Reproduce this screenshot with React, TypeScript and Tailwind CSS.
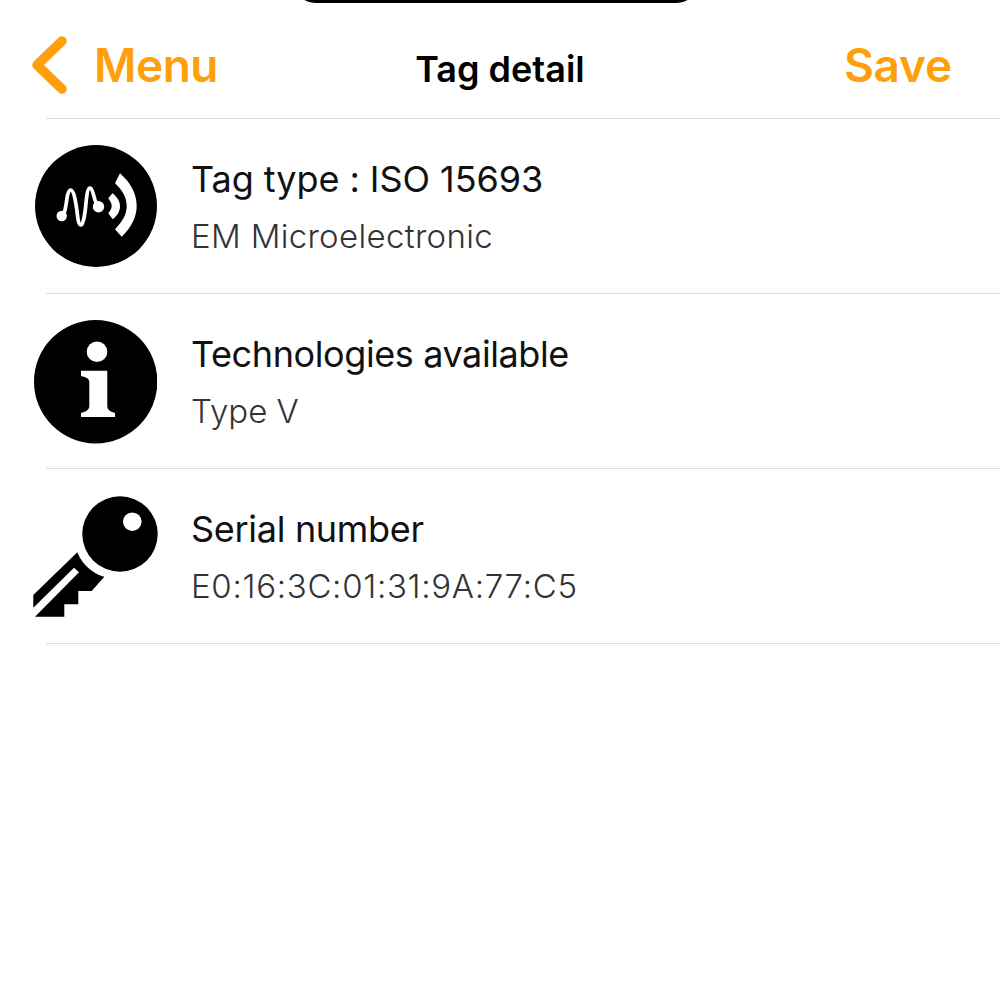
const font = "font-['Inter','Liberation_Sans',sans-serif]";

function WaveIcon() {
  return (
    <svg viewBox="0 0 124 124" className="w-[124px] h-[124px] shrink-0">
      <circle cx="63" cy="61" r="61" fill="#000" />
      <path d="M28.7 71 C32 70 33 60 34 53 C35 47 36 45 37.5 45 C41 45 42.5 56 44 66 C45 76 46 80 48 80 C50 80 52 70 53 58 C54 48 55 43 57 43 C59 43 60.5 50 62 55 C63 58 64 60 65.3 61.7" fill="none" stroke="#fff" strokeWidth="3.7" strokeLinecap="round" strokeLinejoin="round" />
      <circle cx="28.7" cy="71" r="5.2" fill="#fff" />
      <circle cx="65.5" cy="61.7" r="5.7" fill="#fff" />
      <path d="M79.7 48.3 C85 53 87 57 87 61 C87 66 85 70 79.7 74.3 C78 72 76.5 70 75.3 68.3 C77 66 78.7 64 78.7 61 C78.7 58 77 56 75.3 53.3 C76.5 51.5 78 50 79.7 48.3 Z" fill="#fff" />
      <path d="M87 28.3 C98 38 103.7 49 103.7 61 C103.7 72 98 83 88.7 91.7 L82 84.3 C89 77 93.7 70 93.7 61 C93.7 52 89 45 82 38.3 Z" fill="#fff" />
    </svg>
  );
}

function InfoIcon() {
  return (
    <svg viewBox="0 0 124 124" className="w-[124px] h-[124px] shrink-0">
      <circle cx="62.7" cy="61.7" r="61.7" fill="#000" />
      <circle cx="64" cy="31.7" r="10.3" fill="#fff" />
      <path d="M48 50.7 H74.3 V86 C74.3 90 78 92 82 93 V97 H48 V93 C52 92 56.3 90 56.3 86 V62 C56.3 58 52 57 48 56 Z" fill="#fff" />
    </svg>
  );
}

function KeyIcon() {
  return (
    <svg viewBox="0 0 126 124" className="w-[126px] h-[124px] shrink-0">
      <path fillRule="evenodd" d="M87 1.3 A37.7 37.7 0 1 1 87 76.7 A37.7 37.7 0 1 1 87 1.3 Z M99.3 17.4 A9.3 9.3 0 1 0 99.3 36 A9.3 9.3 0 1 0 99.3 17.4 Z" fill="#000" />
      <path d="M44.3 57.3 L0.3 100 V112.7 L41 72.7 L46 77.3 L2 121.7 H31.3 V109.3 H45.3 V96 H58.7 L71.3 81.7 C63 80 50 72 44.3 57.3 Z" fill="#000" />
    </svg>
  );
}

function Row({ icon, title, sub, titleTrack, subTrack }: { icon: React.ReactNode; title: string; sub: string; titleTrack: string; subTrack: string }) {
  return (
    <div className="h-[174px] flex items-start">
      <div className="w-[158px] pl-[33px] pt-[26px] shrink-0">{icon}</div>
      <div className={`pl-[34px] pt-[38px] ${font}`}>
        <div className={`text-[36px] leading-[44px] text-[#111] ml-[-1px] ${titleTrack}`}>{title}</div>
        <div className={`text-[33px] leading-[40px] mt-[15px] text-[#333336] font-light ml-[-1px] ${subTrack}`}>{sub}</div>
      </div>
    </div>
  );
}

function Line() {
  return <div className="ml-[46px] h-px bg-[#dddddd]" />;
}

export default function App() {
  return (
    <div className="w-[1000px] h-[1000px] bg-white overflow-hidden relative">
      <div className="absolute left-[292px] top-[-30px] w-[408px] h-[33px] bg-black rounded-b-[24px]" />
      <header className={`h-[118px] grid grid-cols-[1fr_auto_1fr] items-start px-[31px] ${font}`}>
        <div className="flex items-center gap-[26px] text-[#ff9f0a] pt-[36px]">
          <svg viewBox="0 0 38 58" className="w-[38px] h-[58px]">
            <path d="M31 5 L6 29 L31 53" fill="none" stroke="#ff9f0a" strokeWidth="9.5" strokeLinecap="round" strokeLinejoin="round" />
          </svg>
          <span className="text-[46px] leading-none font-semibold tracking-[-0.5px] ml-[-1px]">Menu</span>
        </div>
        <span className="text-[36px] font-semibold text-black pt-[47px] leading-[44px] whitespace-nowrap">Tag detail</span>
        <span className="text-[46px] leading-none font-semibold text-[#ff9f0a] pt-[42px] text-right mr-[17px] tracking-[-0.2px]">Save</span>
      </header>
      <Line />
      <Row icon={<WaveIcon />} title="Tag type : ISO 15693" sub="EM Microelectronic" titleTrack="tracking-[-0.05px]" subTrack="tracking-[0.33px]" />
      <Line />
      <Row icon={<InfoIcon />} title="Technologies available" sub="Type V" titleTrack="tracking-[-0.4px]" subTrack="tracking-normal" />
      <Line />
      <Row icon={<KeyIcon />} title="Serial number" sub="E0:16:3C:01:31:9A:77:C5" titleTrack="tracking-[-0.3px]" subTrack="tracking-[0.7px]" />
      <Line />
    </div>
  );
}
